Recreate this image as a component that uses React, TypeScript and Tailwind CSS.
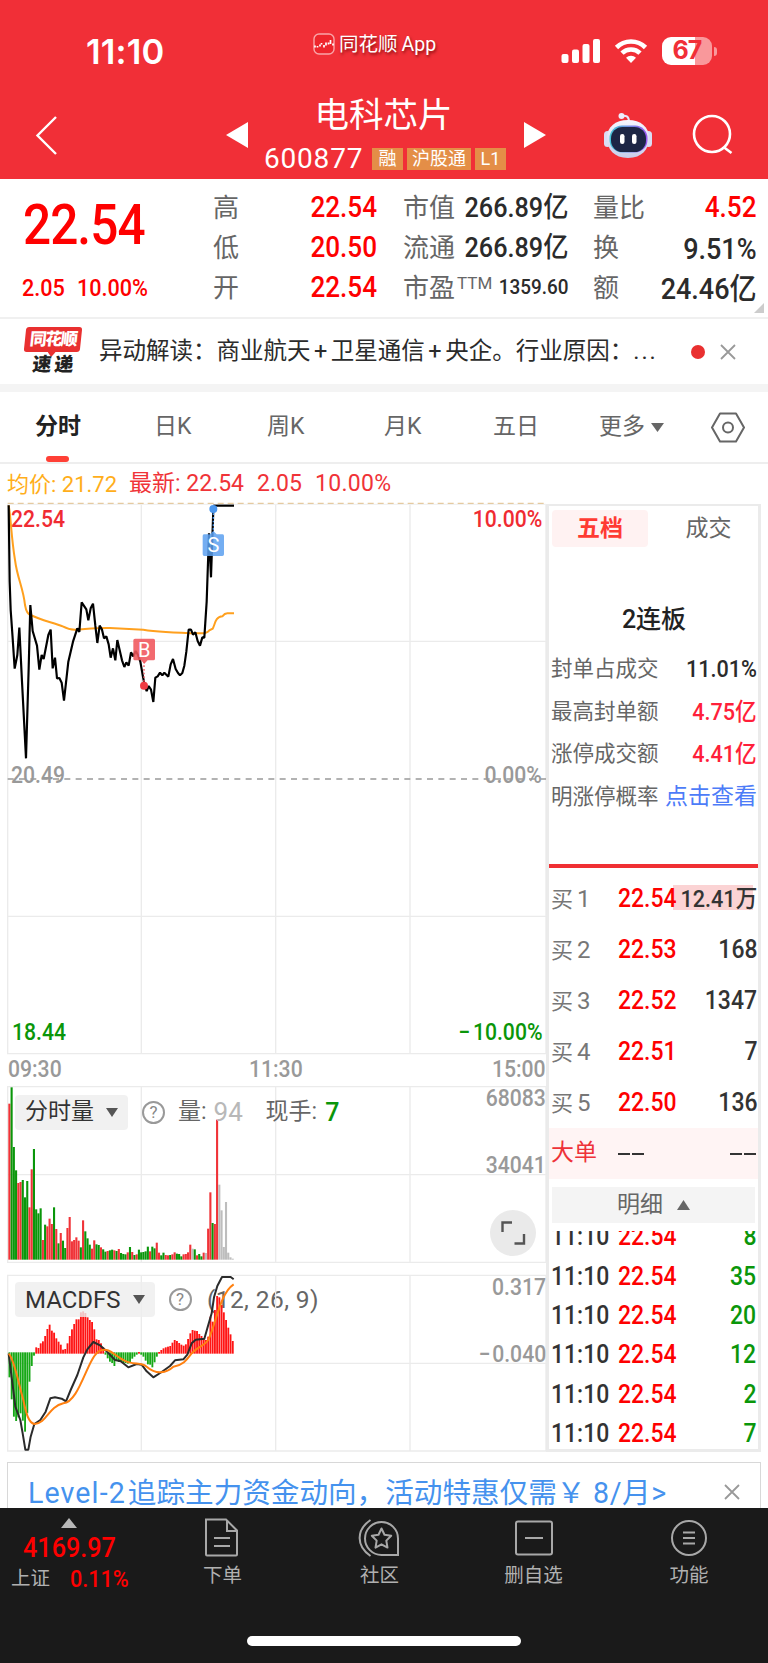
import type { ReactNode } from "react";
import clsx from "clsx";

const STEP = 6.7;

// "colour:top" per minute, r = up, g = down, n = flat
const VOLUME =
  "r220 g171 g350 g420 r458 r455 g449 g501 g452 r531 r417 g356 g537 g549 g534 r629 g583 r588 r565 r581 g531 r596 g639 r608 g631 g653 r593 r560 r633 r629 r621 r631 g651 r570 g603 g624 g643 r655 r630 g642 g644 r651 g657 g664 r662 g660 g658 r660 g662 r656 g668 g671 g672 r666 g650 r665 g674 r672 g658 g666 g665 g663 g649 r663 g649 g654 r637 r667 g675 g667 r674 r675 g674 r672 r666 g670 g671 g678 r672 r671 r666 r643 n655 g657 r675 g671 g678 r667 n668 r595 r486 g578 r581 r268 n463 n540 n650 n515 n667 n681 n685"
    .split(" ")
    .map((s) => ({ color: s[0], top: Number(s.slice(1)) }));

const MACD = [
  352, 418, 470, 483, 472, 460, 482, 515, 460, 365, 318, 287, 262, 264, 250,
  244, 228, 207, 194, 212, 218, 235, 245, 254, 269, 267, 250, 228, 208, 192,
  178, 178, 157, 154, 159, 172, 180, 186, 208, 238, 240, 250, 262, 284, 295,
  305, 309, 318, 302, 306, 306, 309, 309, 311, 306, 296, 290, 284, 276, 284,
  290, 302, 313, 314, 322, 307, 290, 276, 270, 265, 262, 260, 258, 248, 240,
  243, 249, 254, 257, 253, 237, 220, 210, 212, 213, 222, 228, 235, 240, 230,
  170, 185, 150, 108, 112, 135, 157, 180, 203, 223, 243,
];

const VOLUME_COLORS: Record<string, string> = {
  r: "#f03338",
  g: "#0a960a",
  n: "#bdbdbd",
};

const PRICE_PATH =
  "M26 31 L29 260 L32 345 L38 430 L44 521 L52 480 L58 398 L66 560 L78 790 L86 520 L91 330 L98 408 L111 452 L118 524 L125 480 L131 492 L145 420 L152 404 L158 520 L165 488 L171 550 L178 549 L185 563 L192 617 L205 500 L219 440 L232 400 L238 411 L245 322 L259 343 L265 376 L272 340 L279 326 L286 392 L292 444 L299 392 L306 404 L312 430 L319 424 L326 448 L332 488 L339 460 L346 496 L352 435 L366 496 L373 516 L379 502 L386 512 L393 472 L400 484 L407 468 L414 480 L421 500 L428 540 L434 572 L440 588 L446 573 L453 584 L460 621 L466 548 L473 544 L480 533 L487 541 L493 533 L505 545 L512 508 L519 492 L527 522 L534 534 L540 541 L547 534 L553 512 L559 470 L566 404 L573 404 L579 419 L586 412 L593 438 L600 452 L607 427 L613 428 L620 320 L627 115 L633 247 L640 42";

const BIDS = [
  ["1", "22.54", "12.41万"],
  ["2", "22.53", "168"],
  ["3", "22.52", "1347"],
  ["4", "22.51", "7"],
  ["5", "22.50", "136"],
];

const TICKS = ["8", "35", "20", "12", "2", "7"];

function Num({
  children,
  className,
  right,
}: {
  children: ReactNode;
  className?: string;
  right?: boolean;
}) {
  return (
    <span
      className={clsx(
        "inline-block scale-x-90 whitespace-nowrap font-medium",
        right ? "origin-right" : "origin-left",
        className
      )}
    >
      {children}
    </span>
  );
}

function StatusBar() {
  return (
    <div className="flex h-[98px] items-start pt-[32px] text-white">
      <div className="w-[313px] pl-[86px] font-['Inter'] text-[34.500px] leading-[39px] font-semibold tracking-[0.2px]">
        11:10
      </div>
      <div className="flex w-[248px] items-center gap-[4px] leading-[22px]">
        <svg width="22" height="22" viewBox="0 0 22 22">
          <rect x="1" y="1" width="20" height="20" rx="5" fill="#ee252c" stroke="#f9a5a8" strokeWidth="1.4" />
          <path
            d="M2 14.500v-2M4.500 14.500v-1.500M7 13.500v-2M8.500 10v1.500M11 12v2.500M13 9.500v3M15.500 9.500v2M17.500 7v4M20 10.500v2"
            stroke="#fff"
            strokeWidth="1.700"
            fill="none"
          />
        </svg>
        <span className="pt-[2px] text-[19.500px] whitespace-nowrap [text-shadow:1px_2px_3px_rgba(90,0,0,0.7)]">
          同花顺<span className="pl-[4px]">App</span>
        </span>
      </div>
      <svg width="40" height="26" viewBox="0 0 40 26" className="mt-[6px] fill-white">
        <rect x="0.5" y="16" width="7" height="9" rx="2" />
        <rect x="11" y="11.5" width="7" height="13.5" rx="2" />
        <rect x="21.500" y="6" width="7" height="19" rx="2" />
        <rect x="32" y="1" width="7" height="24" rx="2" />
      </svg>
      <svg width="34" height="26" viewBox="0 0 34 26" className="mt-[6px] ml-[13px]" fill="none" stroke="#fff" strokeWidth="4.600">
        <path d="M2.500 9.500a20.500 20.500 0 0 1 29 0" />
        <path d="M8 15.200a12.700 12.700 0 0 1 18 0" />
        <path d="M17 25l-5-5.200a7.200 7.200 0 0 1 10 0z" fill="#fff" stroke="none" />
      </svg>
      <div className="mt-[5px] ml-[14px] flex items-center gap-[2px]">
        <div className="flex h-[28px] w-[50px] items-center justify-center rounded-[9px] bg-[linear-gradient(90deg,#fff_66%,#f9989b_66%)] font-['Inter'] text-[25px] font-bold tracking-[-1px] text-[#f12f37]">
          67
        </div>
        <div className="h-[9px] w-[3px] rounded-r-full bg-[#f9989b]" />
      </div>
    </div>
  );
}

function Robot() {
  return (
    <svg width="50" height="48" viewBox="0 0 50 48">
      <defs>
        <linearGradient id="shell" x1="0" y1="0" x2="0" y2="1">
          <stop offset="0" stopColor="#f6f6ff" />
          <stop offset="1" stopColor="#c9cdea" />
        </linearGradient>
        <linearGradient id="rim" x1="0" y1="0" x2="1" y2="0">
          <stop offset="0" stopColor="#46c8d8" />
          <stop offset="1" stopColor="#9a55f0" />
        </linearGradient>
      </defs>
      <path d="M18 4c5-1 8 0 8 6" stroke="#e6e6fa" strokeWidth="2" fill="none" />
      <circle cx="18.500" cy="4" r="3" fill="#eeeefc" />
      <rect x="1" y="19" width="7" height="16" rx="3.500" fill="#dadcf4" />
      <rect x="42" y="19" width="7" height="16" rx="3.500" fill="#dadcf4" />
      <path d="M25 8c13 0 21 7 21 18s-7 20-21 20S4 37 4 26 12 8 25 8z" fill="url(#shell)" />
      <rect x="6.500" y="13.500" width="38" height="27" rx="12.500" fill="url(#rim)" />
      <rect x="8" y="15" width="35" height="25" rx="11.500" fill="#1d2645" />
      <rect x="17" y="22" width="4.500" height="10" rx="2.200" fill="#fff" />
      <rect x="29" y="22" width="4.500" height="10" rx="2.200" fill="#fff" />
    </svg>
  );
}

function NavBar() {
  return (
    <div className="flex h-[81px] text-white">
      <svg width="226" height="76" viewBox="0 0 226 76" fill="none">
        <path d="M56 19L37.500 37.500L56 56" stroke="#fff" strokeWidth="2.400" />
      </svg>
      <svg width="22" height="26" viewBox="0 0 22 26" className="mt-[24px] fill-white">
        <path d="M0 13L22 0v26z" />
      </svg>
      <div className="flex w-[276px] flex-col items-center">
        <div className="h-[41px] pt-[1px] pr-[5px] text-[34.500px] leading-[32px]">电科芯片</div>
        <div className="flex w-full items-center pt-[7px] pl-[16px]">
          <span className="w-[108px] text-[28px] leading-[26px] tracking-[0.8px]">600877</span>
          <div className="flex gap-[4px] text-[18px] leading-[22px]">
            <span className="h-[22px] w-[31px] bg-[#e48e47] text-center">融</span>
            <span className="h-[22px] w-[64px] bg-[#e48e47] text-center">沪股通</span>
            <span className="h-[22px] w-[31px] bg-[#e48e47] text-center">L1</span>
          </div>
        </div>
      </div>
      <svg width="22" height="26" viewBox="0 0 22 26" className="mt-[24px] fill-white">
        <path d="M22 13L0 0v26z" />
      </svg>
      <div className="mt-[14px] ml-[57px]">
        <Robot />
      </div>
      <svg width="42" height="42" viewBox="0 0 42 42" className="mt-[16px] ml-[39px]" fill="none" stroke="#fff" strokeWidth="2.600">
        <circle cx="20" cy="20" r="18" />
        <path d="M31.500 33l8 6" />
      </svg>
    </div>
  );
}

function Stat({
  label,
  value,
  red,
  size = "text-[29px]",
}: {
  label: ReactNode;
  value: string;
  red?: boolean;
  size?: string;
}) {
  return (
    <div className="flex h-10 items-center justify-between">
      <span className="flex text-[26px] whitespace-nowrap text-[#666]">{label}</span>
      <Num right className={clsx("-ml-10", size, red ? "text-[#fe0000]" : "text-[#2b2b2b]")}>
        {value}
      </Num>
    </div>
  );
}

function Quote() {
  return (
    <div className="relative flex h-[140px] border-b-2 border-[#f0f0f0] pt-[9px]">
      <div className="w-[213px] pl-[22px] text-[#fe0000]">
        <div className="h-[77px] pt-[5px]">
          <Num className="pl-px text-[55px] leading-[64px] tracking-[-1px]">22.54</Num>
        </div>
        <div className="flex pt-[8px] text-[24px] leading-[30px]">
          <Num className="w-[55px]">2.05</Num>
          <Num>10.00%</Num>
        </div>
      </div>
      <div className="w-[164px]">
        <Stat label="高" value="22.54" red />
        <Stat label="低" value="20.50" red />
        <Stat label="开" value="22.54" red />
      </div>
      <div className="ml-[26px] w-[165px]">
        <Stat label="市值" value="266.89亿" size="text-[28px]" />
        <Stat label="流通" value="266.89亿" size="text-[28px]" />
        <Stat
          label={
            <>
              市盈<span className="pt-[5px] pl-[2px] text-[17px] leading-[18px]">TTM</span>
            </>
          }
          value="1359.60"
          size="text-[21px]"
        />
      </div>
      <div className="ml-[25px] w-[164px]">
        <Stat label="量比" value="4.52" red />
        <Stat label="换" value="9.51%" size="text-[30px]" />
        <Stat label="额" value="24.46亿" size="text-[30px]" />
      </div>
      <svg width="10" height="10" className="absolute right-[4px] bottom-[4px]">
        <path d="M10 0v10H0z" fill="#ccc" />
      </svg>
    </div>
  );
}

function News() {
  return (
    <div className="flex h-[73px] items-center border-b-8 border-[#f4f4f4]">
      <div className="ml-[25px] w-[74px]">
        <div className="relative h-[25px] w-[56px] -skew-x-6 rounded-[3px] bg-[#e93030] text-center text-[17px] leading-[25px] font-black tracking-[-1.500px] text-white">
          同花顺
          <svg width="8" height="5" className="absolute top-[25px] left-[24px]">
            <path d="M0 0h8L4 5z" fill="#e93030" />
          </svg>
        </div>
        <div className="flex w-[56px] -skew-x-6 justify-center gap-[3px] pt-[2px] text-[19px] leading-[22px] font-black text-[#222]">
          <span>速</span>
          <span>递</span>
        </div>
      </div>
      <div className="w-[592px] text-[23.500px] whitespace-nowrap text-[#2b2b2b]">
        异动解读：商业航天<span className="px-[3.500px]">+</span>卫星通信<span className="px-[3.500px]">+</span>央企。行业原因：<span className="tracking-[2px]">...</span>
      </div>
      <div className="h-[14px] w-[14px] rounded-full bg-[#e93030]" />
      <svg width="16" height="16" className="ml-[15px]" stroke="#999" strokeWidth="1.800">
        <path d="M1 1l14 14M15 1L1 15" />
      </svg>
    </div>
  );
}

function Tabs() {
  return (
    <div className="flex h-[72px] items-center border-b-2 border-[#eee] pt-[1px] text-[23px] text-[#666]">
      <div className="relative w-[121px] pl-[35px] font-bold text-[#222]">
        分时
        <div className="absolute top-[46px] left-[46px] h-[6px] w-[23px] rounded-[3px] bg-[#ff4036]" />
      </div>
      <div className="w-[112px] pl-[33px]">日K</div>
      <div className="w-[117px] pl-[34px]">周K</div>
      <div className="w-[113px] pl-[34px]">月K</div>
      <div className="w-[107px] pl-[30px]">五日</div>
      <div className="flex w-[141px] items-center gap-[6px] pl-[29px]">
        更多
        <svg width="13" height="9">
          <path d="M0 0h13L6.500 9z" fill="#666" />
        </svg>
      </div>
      <svg width="34" height="31" viewBox="0 0 34 31" fill="none" stroke="#666" strokeWidth="2">
        <path d="M9 1.500h16L33 15.500L25 29.500H9L1 15.500z" strokeLinejoin="round" />
        <circle cx="17" cy="15.500" r="5" />
      </svg>
    </div>
  );
}

function PriceChart() {
  return (
    <div className="relative h-[553px]">
      <svg width="548" height="553" viewBox="0 21 1644 1659" fill="none">
        <path d="M23 28V1676H1638V28M424 28V1676M827 28V1676M1230 28V1676M23 439H1638M23 1264H1638" stroke="#ebebeb" strokeWidth="4" />
        <path d="M23 28H1638" stroke="#eee" strokeWidth="3" />
        <path d="M23 25H1638" stroke="#e5caa0" strokeWidth="3.500" strokeDasharray="18 12" />
        <path d="M23 852H1638" stroke="#999" strokeWidth="5" strokeDasharray="18 16" />
        <path
          d="M26 31C32 60 34 130 45 195C52 250 70 280 75 330Q80 358 92 360C120 375 160 383 190 395Q205 404 225 404C260 402 290 398 330 399L430 404C480 412 560 414 600 415Q620 416 628 406L638 401C645 390 645 365 667 364Q674 355 682 355H702"
          stroke="#ffa01e"
          strokeWidth="6"
        />
        <path d={PRICE_PATH} stroke="#000" strokeWidth="6.500" strokeLinejoin="bevel" />
        <path d="M640 32H702" stroke="#000" strokeWidth="6.500" />
        <circle cx="640" cy="42" r="12" fill="#4b97ee" />
        <path d="M640 55V115" stroke="#4b97ee" strokeWidth="4" strokeDasharray="5 6" />
        <path d="M612 118H630L640 108L650 118H668Q672 118 672 123V178Q672 183 667 183H613Q608 183 608 178V123Q608 118 612 118Z" fill="#5ca0f0" fillOpacity="0.850" />
        <path d="M432 500V572" stroke="#f0555b" strokeWidth="4" strokeDasharray="5 6" />
        <circle cx="432" cy="572" r="12" fill="#f03b42" />
        <path d="M405 431H460Q465 431 465 436V491Q465 496 460 496H443L433 506L423 496H405Q400 496 400 491V436Q400 431 405 431Z" fill="#f0555b" fillOpacity="0.880" />
        <g fill="#fff" fontFamily="Roboto" fontSize="60" textAnchor="middle">
          <text x="640" y="172">S</text>
          <text x="433" y="485">B</text>
        </g>
      </svg>
      <div className="absolute inset-0 w-[542px] text-[23.500px] leading-[26px]">
        <Num className="absolute top-[4px] left-[11px] text-[#f02b32]">22.54</Num>
        <Num right className="absolute top-[4px] right-0 text-[#f02b32]">10.00%</Num>
        <Num className="absolute top-[260px] left-[11px] text-[#999]">20.49</Num>
        <Num right className="absolute top-[260px] right-0 text-[#999]">0.00%</Num>
        <Num className="absolute top-[517px] left-[12px] text-[#0a960a]">18.44</Num>
        <Num right className="absolute top-[517px] right-0 text-[#0a960a]">
          <span className="pr-[3px]">−</span>10.00%
        </Num>
      </div>
    </div>
  );
}

function Chip({ children }: { children: ReactNode }) {
  return (
    <span className="flex h-[35px] items-center gap-[12px] rounded-[4px] bg-[#eeeeee]/80 px-[10px] text-[#333]">
      {children}
      <svg width="12" height="9">
        <path d="M0 0h12L6 9z" fill="#555" />
      </svg>
    </span>
  );
}

function Help() {
  return (
    <span className="flex h-[23px] w-[23px] items-center justify-center rounded-full border-2 border-[#999] text-[17px] leading-none text-[#888]">
      ?
    </span>
  );
}

function VolumeChart() {
  return (
    <div className="relative mt-[1px] h-[188px]">
      <svg width="548" height="188" viewBox="0 164 1644 564" className="absolute">
        <path d="M23 169V696H1638V169ZM424 169V696M827 169V696M1230 169V696M23 433H1638" fill="none" stroke="#ebebeb" strokeWidth="4" />
        {VOLUME.map((bar, i) => (
          <rect key={i} x={25 + i * STEP} y={bar.top} width={6.3} height={688 - bar.top} fill={VOLUME_COLORS[bar.color]} />
        ))}
      </svg>
      <div className="absolute top-[8px] left-[15px] flex items-center text-[23px] text-[#666]">
        <Chip>分时量</Chip>
        <div className="ml-[14px] flex items-center">
          <Help />
          <span className="ml-[13px]">量:</span>
          <span className="ml-[7px] w-[52px] text-[26px] text-[#b8b8b8]">94</span>
          <span>现手:</span>
          <span className="ml-[8px] text-[25px] font-medium text-[#0a960a]">7</span>
        </div>
      </div>
      <div className="absolute inset-0 w-[546px] text-[23.500px] leading-[26px] text-[#999]">
        <Num right className="absolute top-0 right-0">68083</Num>
        <Num right className="absolute top-[67px] right-0">34041</Num>
      </div>
      <svg width="46" height="46" className="absolute top-[125px] left-[490px]" fill="none" stroke="#555" strokeWidth="2.400">
        <circle cx="23" cy="23" r="23" fill="#eaeaea" stroke="none" />
        <path d="M12.500 22V12.500H22M24.500 33.500H34V24" />
      </svg>
    </div>
  );
}

function MacdChart() {
  return (
    <div className="relative h-[181px]">
      <div className="absolute top-[9px] left-[207px] text-[24.500px] leading-[36px] tracking-[0.4px] text-[#666]">(12, 26, 9)</div>
      <svg width="548" height="181" viewBox="0 39 1644 543" className="absolute" fill="none">
        <path d="M23 46V573H1638V46ZM424 46V573M827 46V573M1230 46V573M23 310H1638" stroke="#ebebeb" strokeWidth="4" />
        {MACD.map((v, i) => (
          <rect
            key={i}
            x={25.5 + i * STEP}
            y={v > 281 ? 277 : v}
            width={5.6}
            height={v > 281 ? v - 277 : 281 - v}
            fill={v > 281 ? "#16a816" : "#ff1414"}
          />
        ))}
        <path
          d="M26 281L36 360L46 440L61 480L68 520L76 569H85L92 530L103 492L121 480L137 455L151 415L165 412L185 416L198 424L212 390L232 345L250 292L262 268L280 246L300 256L318 272L345 300L362 304L385 322L410 312L425 314L440 334L460 352L485 336L510 318L525 301L550 298L562 284L575 250L587 239L613 236L622 205L635 160L642 112L652 78L666 51H692L701 58"
          stroke="#2b2b2b"
          strokeWidth="6"
          strokeLinejoin="round"
        />
        <path
          d="M26 281C44 300 55 370 70 420C78 460 86 490 104 492C140 490 145 440 190 430C240 425 262 290 300 272C330 262 340 285 370 300C400 318 420 304 440 320C470 346 500 338 520 320C550 315 560 300 575 280C600 255 610 260 625 240C650 185 660 100 701 73"
          stroke="#ff8010"
          strokeWidth="6"
        />
      </svg>
      <div className="absolute top-[9px] left-[15px] flex items-center text-[24px]">
        <Chip>MACDFS</Chip>
        <div className="ml-[14px]">
          <Help />
        </div>
      </div>
      <div className="absolute inset-0 w-[546px] text-[23.500px] leading-[26px] text-[#999]">
        <Num right className="absolute top-[1px] right-0">0.317</Num>
        <Num right className="absolute top-[68px] right-0">
          <span className="pr-[2px]">−</span>0.040
        </Num>
      </div>
    </div>
  );
}

function BoardInfo() {
  const rows = [
    ["封单占成交", "11.01%", "text-[#2b2b2b]"],
    ["最高封单额", "4.75亿", "text-[#ff1f3a]"],
    ["涨停成交额", "4.41亿", "text-[#ff1f3a]"],
  ];
  return (
    <div className="h-[362px] border-b-4 border-[#f02f33] pr-px pl-[2px]">
      <div className="flex pt-[4px] pl-px text-center text-[23px] leading-[37px]">
        <div className="w-[96px] shrink-0 rounded-[4px] bg-[#fff2f2] font-bold text-[#ff3b33]">五档</div>
        <div className="flex-1 pl-[12px] text-[#666]">成交</div>
      </div>
      <div className="pt-[55px] text-center text-[25px] leading-[36px] font-medium text-[#222]">2连板</div>
      <div className="pt-[10px] text-[21.500px] text-[#666]">
        {rows.map(([label, value, color]) => (
          <div key={label} className="flex h-[42.600px] items-center justify-between">
            {label}
            <Num right className={clsx("text-[24px]", color)}>{value}</Num>
          </div>
        ))}
        <div className="flex h-[42.600px] items-center justify-between whitespace-nowrap">
          明涨停概率<span className="text-[23px] text-[#4d7cf8]">点击查看</span>
        </div>
      </div>
    </div>
  );
}

function Dashes() {
  return (
    <span className="flex gap-[2px]">
      <i className="h-[2px] w-[12px] bg-current" />
      <i className="h-[2px] w-[12px] bg-current" />
    </span>
  );
}

function SidePanel() {
  return (
    <div className="mt-[2px] h-[948px] w-[215px] border-[3px] border-t-2 border-[#ebebeb]">
      <BoardInfo />
      <div className="pt-[5px]">
        {BIDS.map(([level, price, size], i) => (
          <div key={level} className="relative flex h-[51px] items-center pl-[2px] text-[25.500px]">
            {i === 0 && <div className="absolute top-[12px] left-[124px] h-[25px] w-[80px] bg-[#fbd3d4]" />}
            <span className="w-[67px] text-[22px] text-[#777]">
              买<span className="pl-[4px] text-[24px]">{level}</span>
            </span>
            <Num className="relative text-[#fe0000]">{price}</Num>
            <Num right className={clsx("absolute right-[1px] text-[#333]", i === 0 && "text-[24px]")}>{size}</Num>
          </div>
        ))}
      </div>
      <div className="flex h-[51px] items-center bg-[#fff4f4] px-[2px] text-[23px] text-[#ee3238]">
        <span className="w-[67px]">大单</span>
        <span className="flex flex-1 justify-between text-[#333]">
          <Dashes />
          <Dashes />
        </span>
      </div>
      <div className="mx-[3px] mt-[8px] flex h-[36px] items-center justify-center gap-[14px] bg-[#f4f4f4] text-[23px] text-[#666]">
        明细
        <svg width="13" height="10">
          <path d="M0 10h13L6.500 0z" fill="#666" />
        </svg>
      </div>
      <div className="mt-[8px] flex h-[222px] flex-col justify-end overflow-hidden">
        {TICKS.map((qty) => (
          <div key={qty} className="flex h-[39.400px] shrink-0 items-center px-[2px] text-[25.500px] text-[#333]">
            <Num className="w-[67px]">11:10</Num>
            <Num className="text-[#fe0000]">22.54</Num>
            <Num right className="ml-auto text-[#0a960a]">{qty}</Num>
          </div>
        ))}
      </div>
    </div>
  );
}

function BottomBar() {
  const items = [
    {
      label: "下单",
      width: "w-[157px]",
      icon: (
        <>
          <path d="M3 1.500h20l11 11V36.500q0 1-1 1H4q-1 0-1-1z" />
          <path d="M24 2v11h10M11 20h16M11 28h16" />
        </>
      ),
    },
    {
      label: "社区",
      width: "w-[157px]",
      icon: (
        <>
          <path d="M10.500 2C-4 12-4 28 10.500 38" />
          <path d="M21.500 4a16.500 16.500 0 0 0 0 33H38V20.500A16.500 16.500 0 0 0 21.500 4z" />
          <path d="M21.500 10.500l3 6.300 6.700 1-4.900 4.800 1.200 7L21.500 26.300l-6 3.300 1.200-7-4.900-4.800 6.700-1z" strokeLinejoin="round" />
        </>
      ),
    },
    {
      label: "删自选",
      width: "w-[151px]",
      icon: (
        <>
          <rect x="2" y="3.500" width="36" height="33" rx="2" />
          <path d="M11 20h18" />
        </>
      ),
    },
    {
      label: "功能",
      width: "w-[160px]",
      icon: (
        <>
          <circle cx="20" cy="20" r="17" />
          <path d="M14 14.500h12M14 20h12M14 25.500h12" />
        </>
      ),
    },
  ];
  return (
    <div className="relative z-10 h-[155px] bg-[#1a1a1a] text-[#b0b0b0]">
      <div className="flex">
        <div className="w-[144px] shrink-0 pt-[10px]">
          <svg width="16" height="10" className="ml-[61px]">
            <path d="M0 10h16L8 0z" fill="#b8b8b8" />
          </svg>
          <Num className="ml-[23px] pt-[3px] text-[28px] leading-[34px] text-[#fe0000]">4169.97</Num>
          <div className="flex items-center pl-[11px] text-[19.500px] leading-[28px]">
            <span className="w-[59px]">上证</span>
            <Num className="text-[24px] text-[#fe0000]">0.11%</Num>
          </div>
        </div>
        {items.map((item) => (
          <div key={item.label} className={clsx("flex shrink-0 flex-col items-center pt-[10px]", item.width)}>
            <svg width="40" height="40" viewBox="0 0 40 40" fill="none" stroke="#a8a8a8" strokeWidth="2" overflow="visible">
              {item.icon}
            </svg>
            <span className="pt-[4px] text-[19.500px] leading-[28px]">{item.label}</span>
          </div>
        ))}
      </div>
      <div className="absolute bottom-[17px] left-[247px] h-[10px] w-[274px] rounded-full bg-white" />
    </div>
  );
}

export default function App() {
  return (
    <div className="h-[1663px] w-[768px] overflow-hidden bg-white font-['Roboto','Noto_Sans_CJK_SC',sans-serif]">
      <div className="h-[179px] bg-[#f12f37]">
        <StatusBar />
        <NavBar />
      </div>
      <Quote />
      <News />
      <Tabs />
      <div className="flex h-[38px] items-center pt-[2px] pl-[7px] text-[23px] text-[#f03338]">
        <span className="w-[122px] text-[22px] text-[#ffae1a]">均价: 21.72</span>
        <span className="w-[128px]">最新: 22.54</span>
        <span className="w-[58px]">2.05</span>
        <span className="tracking-[0.3px]">10.00%</span>
      </div>
      <div className="flex">
        <div className="w-[546px]">
          <PriceChart />
          <div className="flex h-[29px] items-center justify-between pt-px pl-[8px] text-[23.500px] leading-none text-[#999]">
            <Num>09:30</Num>
            <Num className="ml-[4px]">11:30</Num>
            <Num right>15:00</Num>
          </div>
          <VolumeChart />
          <MacdChart />
        </div>
        <SidePanel />
      </div>
      <div className="mx-[7px] mt-[8px] flex h-[46px] justify-between overflow-hidden border border-b-0 border-[#d8d8d8] pr-[20px] pl-[20px] text-[28.600px] leading-[60px] whitespace-nowrap text-[#4592ee]">
        <span>
          <span className="pr-[2px] tracking-[1.100px]">Level-2</span>追踪主力资金动向，活动特惠仅需￥<span className="tracking-[0.6px]"> 8/月&gt;</span>
        </span>
        <svg width="16" height="16" className="mt-[21px]" stroke="#999" strokeWidth="1.800">
          <path d="M1 1l14 14M15 1L1 15" />
        </svg>
      </div>
      <BottomBar />
    </div>
  );
}
